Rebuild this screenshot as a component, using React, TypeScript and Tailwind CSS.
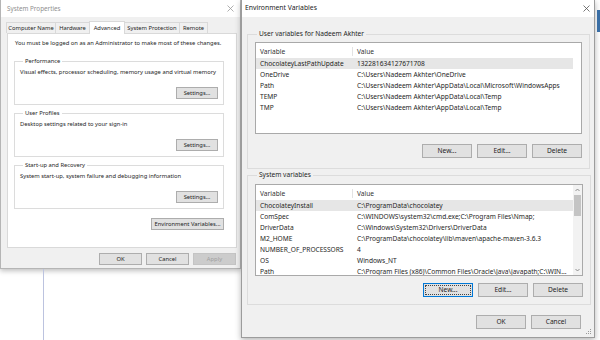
import React from "react";

const userVars = [
  ["ChocolateyLastPathUpdate", "132281634127671708"],
  ["OneDrive", "C:\\Users\\Nadeem Akhter\\OneDrive"],
  ["Path", "C:\\Users\\Nadeem Akhter\\AppData\\Local\\Microsoft\\WindowsApps"],
  ["TEMP", "C:\\Users\\Nadeem Akhter\\AppData\\Local\\Temp"],
  ["TMP", "C:\\Users\\Nadeem Akhter\\AppData\\Local\\Temp"],
];

const sysVars = [
  ["ChocolateyInstall", "C:\\ProgramData\\chocolatey"],
  ["ComSpec", "C:\\WINDOWS\\system32\\cmd.exe;C:\\Program Files\\Nmap;"],
  ["DriverData", "C:\\Windows\\System32\\Drivers\\DriverData"],
  ["M2_HOME", "C:\\ProgramData\\chocolatey\\lib\\maven\\apache-maven-3.6.3"],
  ["NUMBER_OF_PROCESSORS", "4"],
  ["OS", "Windows_NT"],
  ["Path", "C:\\Program Files (x86)\\Common Files\\Oracle\\Java\\javapath;C:\\WIN..."],
];

function CloseX({ color }: { color: string }) {
  return (
    <svg width="7" height="7" viewBox="0 0 7 7">
      <path d="M0.5 0.5 L6.5 6.5 M6.5 0.5 L0.5 6.5" stroke={color} strokeWidth="0.8" />
    </svg>
  );
}

function Btn({
  label,
  className = "",
  disabled = false,
  focused = false,
}: {
  label: string;
  className?: string;
  disabled?: boolean;
  focused?: boolean;
}) {
  if (focused) {
    return (
      <div className={`flex border border-[#0078d7] bg-[#e1e1e1] p-[1px] ${className}`}>
        <div className="flex flex-1 items-center justify-center border border-dotted border-[#444]">
          {label}
        </div>
      </div>
    );
  }
  return (
    <div
      className={`flex items-center justify-center border ${
        disabled
          ? "border-[#c4c4c4] bg-[#cccccc] text-[#a0a0a0]"
          : "border-[#adadad] bg-[#e1e1e1]"
      } ${className}`}
    >
      {label}
    </div>
  );
}

function Group({ title, text, className = "" }: { title: string; text: string; className?: string }) {
  return (
    <fieldset className={`border border-[#dcdcdc] px-[5px] pb-[5px] ${className}`}>
      <legend className="ml-[3px] px-[2px] leading-[8px]">{title}</legend>
      <div className="mt-[3px] leading-[8px]">{text}</div>
      <div className="mt-[11px] flex justify-end">
        <Btn label="Settings..." className="h-[12px] w-[42px]" />
      </div>
    </fieldset>
  );
}

function VarList({ rows, scroll }: { rows: string[][]; scroll?: boolean }) {
  return (
    <div className="flex h-[92px] overflow-hidden border border-[#a9a9a9] bg-white">
      <div className="w-[317px] shrink-0">
        <div className="flex h-[15px] items-center pt-[2px] text-[#333]">
          <div className="w-[97px] shrink-0 border-r border-[#e3e3e3] pl-[4px]">Variable</div>
          <div className="flex-1 pl-[4px]">Value</div>
        </div>
        {rows.map(([k, v], i) => (
          <div
            key={k + i}
            className={`flex h-[11px] items-center ${i === 0 ? "bg-[#e6e6e6]" : ""}`}
          >
            <div className="w-[97px] shrink-0 truncate pl-[4px]">{k}</div>
            <div className="flex-1 truncate whitespace-nowrap pl-[4px]">{v}</div>
          </div>
        ))}
      </div>
      {scroll && (
        <div className="ml-auto flex w-[9px] flex-col items-center bg-[#f2f2f2] py-[3px]">
          <svg width="5" height="4" viewBox="0 0 5 4">
            <path d="M0.5 3 L2.5 1 L4.5 3" fill="none" stroke="#777" strokeWidth="0.8" />
          </svg>
          <div className="mt-[3px] h-[21px] w-[7px] bg-[#c4c4c4]" />
          <div className="flex-1" />
          <svg width="5" height="4" viewBox="0 0 5 4">
            <path d="M0.5 1 L2.5 3 L4.5 1" fill="none" stroke="#777" strokeWidth="0.8" />
          </svg>
        </div>
      )}
    </div>
  );
}

export default function App() {
  const tabs = [
    { label: "Computer Name", w: "w-[50px]" },
    { label: "Hardware", w: "w-[35px]" },
    { label: "Advanced", w: "w-[36px]", active: true },
    { label: "System Protection", w: "w-[56px]" },
    { label: "Remote", w: "w-[29px]" },
  ];

  return (
    <div className="flex h-[340px] w-[600px] overflow-hidden bg-white font-['Noto_Sans',sans-serif] text-[#1e1e1e]">
      {/* System Properties */}
      <div className="flex w-[241px] shrink-0 flex-col">
        <div className="flex h-[269px] flex-col border border-t-0 border-[#b5b5b5] bg-[#f0f0f0] text-[5.8px] shadow-[0_2px_5px_rgba(0,0,0,0.25)]">
          <div className="flex h-[17px] items-center justify-between bg-white pl-[6px] pr-[6px]">
            <span className="text-[6.3px] text-[#8f8f8f]">System Properties</span>
            <CloseX color="#9a9a9a" />
          </div>
          <div className="flex h-[16px] items-end pl-[6px]">
            {tabs.map((t) =>
              t.active ? (
                <div
                  key={t.label}
                  className={`relative z-10 -mb-px -ml-px flex h-[13px] items-center justify-center border border-b-0 border-[#d9d9d9] bg-white ${t.w}`}
                >
                  {t.label}
                </div>
              ) : (
                <div
                  key={t.label}
                  className={`-ml-px flex h-[11px] items-center justify-center border border-b-0 border-[#d9d9d9] bg-[#f0f0f0] ${t.w}`}
                >
                  {t.label}
                </div>
              )
            )}
          </div>
          <div className="ml-[6px] mr-[3px] flex h-[215px] flex-col border border-[#d9d9d9] bg-white pl-[6px] pr-[12px] pt-[5px]">
            <div className="pl-[1px] leading-[8px]">
              You must be logged on as an Administrator to make most of these changes.
            </div>
            <Group
              className="mt-[10px]"
              title="Performance"
              text="Visual effects, processor scheduling, memory usage and virtual memory"
            />
            <Group className="mt-[4px]" title="User Profiles" text="Desktop settings related to your sign-in" />
            <Group
              className="mt-[4px]"
              title="Start-up and Recovery"
              text="System start-up, system failure and debugging information"
            />
            <div className="mt-[9px] flex justify-end">
              <Btn label="Environment Variables..." className="h-[12px] w-[73px]" />
            </div>
          </div>
          <div className="mt-[5px] flex justify-end gap-[4px] pr-[4px]">
            <Btn label="OK" className="h-[12px] w-[43px]" />
            <Btn label="Cancel" className="h-[12px] w-[43px]" />
            <Btn label="Apply" disabled className="h-[12px] w-[43px]" />
          </div>
        </div>
        <div className="flex-1 pl-[43px]">
          <div className="h-full w-px bg-[#bcc3df]" />
        </div>
      </div>

      {/* Environment Variables */}
      <div className="flex h-[338px] w-[354px] shrink-0 flex-col border border-t-0 border-[#9c9c9c] bg-[#f0f0f0] text-[6.6px] shadow-[0_2px_6px_rgba(0,0,0,0.3)]">
        <div className="flex h-[17px] items-center justify-between bg-white pl-[3px] pr-[4px]">
          <span className="text-[6.8px] text-[#222]">Environment Variables</span>
          <CloseX color="#555" />
        </div>
        <fieldset className="ml-[5px] mr-[4px] mt-[12px] border border-[#dcdcdc] px-[7px] pb-[10px]">
          <legend className="ml-[2px] px-[2px] leading-[10px]">User variables for Nadeem Akhter</legend>
          <div className="mt-[3px]">
            <VarList rows={userVars} />
          </div>
          <div className="mt-[10px] flex justify-end gap-[5px]">
            <Btn label="New..." className="h-[14px] w-[50px]" />
            <Btn label="Edit..." className="h-[14px] w-[50px]" />
            <Btn label="Delete" className="h-[14px] w-[50px]" />
          </div>
        </fieldset>
        <fieldset className="ml-[5px] mr-[4px] mt-[1px] border border-[#dcdcdc] px-[7px] pb-[7px]">
          <legend className="ml-[2px] px-[2px] leading-[10px]">System variables</legend>
          <div className="mt-[4px]">
            <VarList rows={sysVars} scroll />
          </div>
          <div className="mt-[7px] flex justify-end gap-[5px]">
            <Btn label="New..." focused className="h-[14px] w-[50px]" />
            <Btn label="Edit..." className="h-[14px] w-[50px]" />
            <Btn label="Delete" className="h-[14px] w-[50px]" />
          </div>
        </fieldset>
        <div className="mt-[10px] flex justify-end gap-[5px] pr-[13px]">
          <Btn label="OK" className="h-[14px] w-[50px]" />
          <Btn label="Cancel" className="h-[14px] w-[50px]" />
        </div>
        <div className="mt-auto flex justify-end pb-[2px] pr-[2px]">
          <svg width="6" height="6" viewBox="0 0 6 6">
            <rect x="4" y="0" width="1" height="1" fill="#9a9a9a" />
            <rect x="2" y="2" width="1" height="1" fill="#9a9a9a" />
            <rect x="4" y="2" width="1" height="1" fill="#9a9a9a" />
            <rect x="0" y="4" width="1" height="1" fill="#9a9a9a" />
            <rect x="2" y="4" width="1" height="1" fill="#9a9a9a" />
            <rect x="4" y="4" width="1" height="1" fill="#9a9a9a" />
          </svg>
        </div>
      </div>

      <div className="flex flex-1 flex-col">
        <div className="ml-[2px] mt-[10px] h-[22px] bg-[#3a6ea5]" />
      </div>
    </div>
  );
}
